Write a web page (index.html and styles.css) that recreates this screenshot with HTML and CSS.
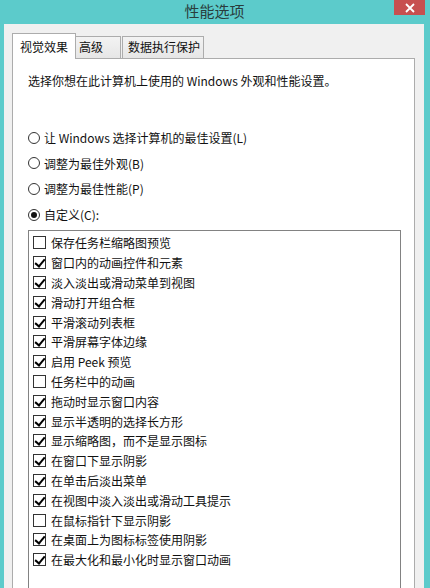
FILE: index.html
```html
<!DOCTYPE html>
<html lang="zh-CN">
<head>
<meta charset="utf-8">
<title>性能选项</title>
<link rel="stylesheet" href="styles.css">
</head>
<body>
<div class="window">
  <div class="titlebar">
    <span class="spacer"></span>
    <span class="title">性能选项</span>
    <span class="close"><svg width="10" height="10" viewBox="0 0 10 10"><path d="M1 1 L9 9 M9 1 L1 9" stroke="#fff" stroke-width="1.8" fill="none"/></svg></span>
  </div>
  <div class="body">
    <div class="tabs">
      <div class="tab active">视觉效果</div>
      <div class="tab t2">高级</div>
      <div class="tab t3">数据执行保护</div>
    </div>
    <div class="panel">
      <p class="desc">选择你想在此计算机上使用的 Windows 外观和性能设置。</p>
      <div class="radios">
        <div class="radio-row"><span class="radio"></span><span>让 Windows 选择计算机的最佳设置(L)</span></div>
        <div class="radio-row"><span class="radio"></span><span>调整为最佳外观(B)</span></div>
        <div class="radio-row"><span class="radio"></span><span>调整为最佳性能(P)</span></div>
        <div class="radio-row"><span class="radio on"></span><span>自定义(C):</span></div>
      </div>
      <div class="listbox">
        <div class="item"><span class="cb"></span><span>保存任务栏缩略图预览</span></div>
        <div class="item"><span class="cb on"></span><span>窗口内的动画控件和元素</span></div>
        <div class="item"><span class="cb on"></span><span>淡入淡出或滑动菜单到视图</span></div>
        <div class="item"><span class="cb on"></span><span>滑动打开组合框</span></div>
        <div class="item"><span class="cb on"></span><span>平滑滚动列表框</span></div>
        <div class="item"><span class="cb on"></span><span>平滑屏幕字体边缘</span></div>
        <div class="item"><span class="cb on"></span><span>启用 Peek 预览</span></div>
        <div class="item"><span class="cb"></span><span>任务栏中的动画</span></div>
        <div class="item"><span class="cb on"></span><span>拖动时显示窗口内容</span></div>
        <div class="item"><span class="cb on"></span><span>显示半透明的选择长方形</span></div>
        <div class="item"><span class="cb on"></span><span>显示缩略图，而不是显示图标</span></div>
        <div class="item"><span class="cb on"></span><span>在窗口下显示阴影</span></div>
        <div class="item"><span class="cb on"></span><span>在单击后淡出菜单</span></div>
        <div class="item"><span class="cb on"></span><span>在视图中淡入淡出或滑动工具提示</span></div>
        <div class="item"><span class="cb"></span><span>在鼠标指针下显示阴影</span></div>
        <div class="item"><span class="cb on"></span><span>在桌面上为图标标签使用阴影</span></div>
        <div class="item"><span class="cb on"></span><span>在最大化和最小化时显示窗口动画</span></div>
      </div>
    </div>
  </div>
</div>
</body>
</html>
```
FILE: styles.css
```css
* { box-sizing: border-box; }
html, body { margin: 0; padding: 0; }
body {
  width: 430px;
  height: 588px;
  overflow: hidden;
  background: #5ccbcb;
  font-family: "Noto Sans CJK SC", "Noto Sans", sans-serif;
  font-size: 12px;
  color: #111;
}
.window {
  display: flex;
  flex-direction: column;
  height: 588px;
}
.titlebar {
  height: 24px;
  display: grid;
  grid-template-columns: 1fr auto 1fr;
  align-items: start;
  padding: 0 5px 0 4px;
}
.title {
  font-size: 15px;
  line-height: 22px;
  color: #2a3d3d;
}
.close {
  justify-self: end;
  width: 31px;
  height: 15px;
  background: #c75050;
  display: flex;
  align-items: center;
  justify-content: center;
}
.close svg { display: block; }
.body {
  flex: 1;
  margin: 0 6px 0 4px;
  background: #f0f0f0;
  padding: 9px 9px 0 8px;
  display: flex;
  flex-direction: column;
  min-height: 0;
}
.tabs {
  display: flex;
  align-items: flex-end;
  height: 25px;
}
.tab {
  height: 22px;
  border: 1px solid #acacac;
  border-bottom: none;
  background: linear-gradient(#f3f3f3, #e6e6e6);
  line-height: 20px;
  padding: 0 0 0 3px;
}
.tab.active {
  height: 26px;
  width: 64px;
  margin-bottom: -1px;
  background: #fff;
  position: relative;
  z-index: 1;
  padding-left: 7px;
  line-height: 26px;
}
.tab.t2 { width: 45px; border-left: none; }
.tab.t3 { width: 82px; margin-left: 1px; padding-left: 5px; }
.panel {
  flex: 1;
  background: #fff;
  border: 1px solid #acacac;
  border-bottom: none;
  padding: 14px 13px 0 15px;
  display: flex;
  flex-direction: column;
  min-height: 0;
}
.desc {
  margin: 0;
  line-height: 16px;
}
.radios {
  margin-top: 40.5px;
  display: flex;
  flex-direction: column;
  gap: 9.7px;
}
.radio-row {
  display: flex;
  align-items: center;
  height: 16px;
  gap: 4px;
}
.radio {
  width: 12px;
  height: 12px;
  border: 1px solid #333;
  border-radius: 50%;
  background: #fff;
  display: flex;
  align-items: center;
  justify-content: center;
  flex: none;
}
.radio.on::after {
  content: "";
  width: 6px;
  height: 6px;
  border-radius: 50%;
  background: #111;
}
.listbox {
  margin-top: 7.5px;
  flex: 1;
  border: 1px solid #828282;
  border-bottom: none;
  padding: 2px 0 0 4px;
}
.item {
  height: 19.8px;
  display: flex;
  align-items: center;
  gap: 5px;
}
.cb {
  width: 13px;
  height: 13px;
  border: 1px solid #333;
  background: #fff;
  flex: none;
  position: relative;
}
.cb.on::after {
  content: "";
  position: absolute;
  left: 3px;
  top: 0px;
  width: 4px;
  height: 8px;
  border-right: 2px solid #000;
  border-bottom: 2px solid #000;
  transform: rotate(40deg);
}
```
